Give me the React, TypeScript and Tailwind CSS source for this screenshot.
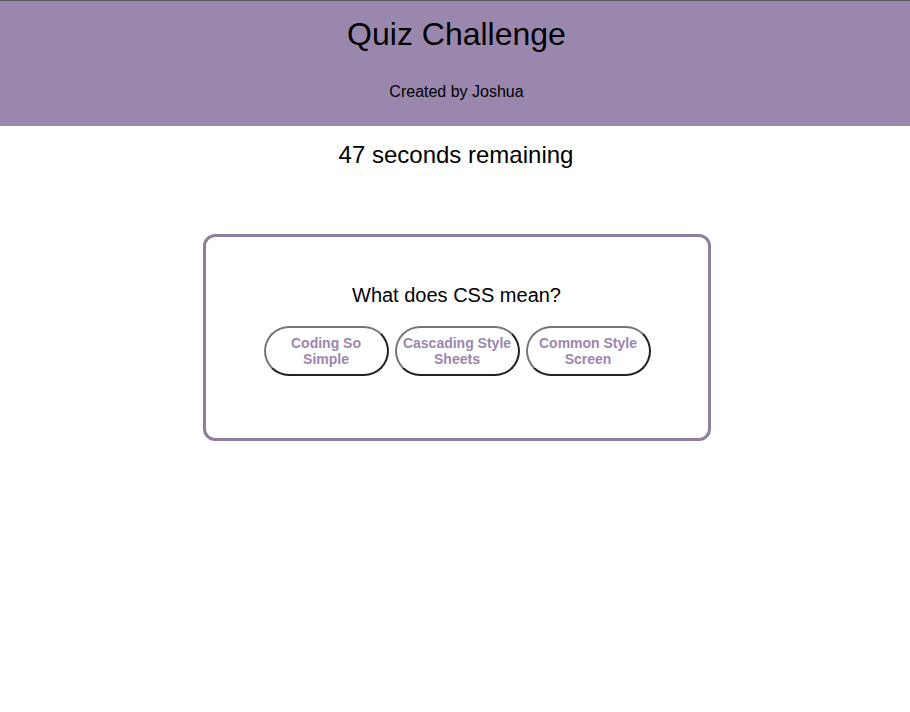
import React from "react";

export default function App() {
  const answers = [
    ["Coding So", "Simple"],
    ["Cascading Style", "Sheets"],
    ["Common Style", "Screen"],
  ];
  return (
    <div className="min-h-[712px] bg-white border-t border-[#5a5a5a] font-['Liberation_Sans',Arial,sans-serif] text-black">
      <header className="bg-[#9a87ae] h-[125px] flex flex-col items-center pl-[3px]">
        <h1 className="mt-[15px] text-[32px] leading-[37px]">Quiz Challenge</h1>
        <p className="mt-[30px] text-[16px] leading-[18px]">Created by Joshua</p>
      </header>
      <div className="text-center text-[24px] leading-[28px] mt-[15px] pl-[2px]">47 seconds remaining</div>
      <div className="flex justify-center mt-[65px]">
        <div className="ml-[3px] w-[508px] h-[207px] rounded-[12px] border-[3px] border-[#8e7f9f] flex flex-col items-center">
          <p className="mt-[47px] text-[20px] leading-[23px]">What does CSS mean?</p>
          <div className="mt-[19px] flex gap-[6px] pl-[1px]">
            {answers.map((a, i) => (
              <button
                key={i}
                className="w-[125px] h-[50px] rounded-full border-2 [border-style:outset] border-[#767676] bg-white text-[#9a87ae] font-bold text-[14px] leading-[16px] flex flex-col items-center justify-center"
              >
                <span>{a[0]}</span>
                <span>{a[1]}</span>
              </button>
            ))}
          </div>
        </div>
      </div>
    </div>
  );
}
